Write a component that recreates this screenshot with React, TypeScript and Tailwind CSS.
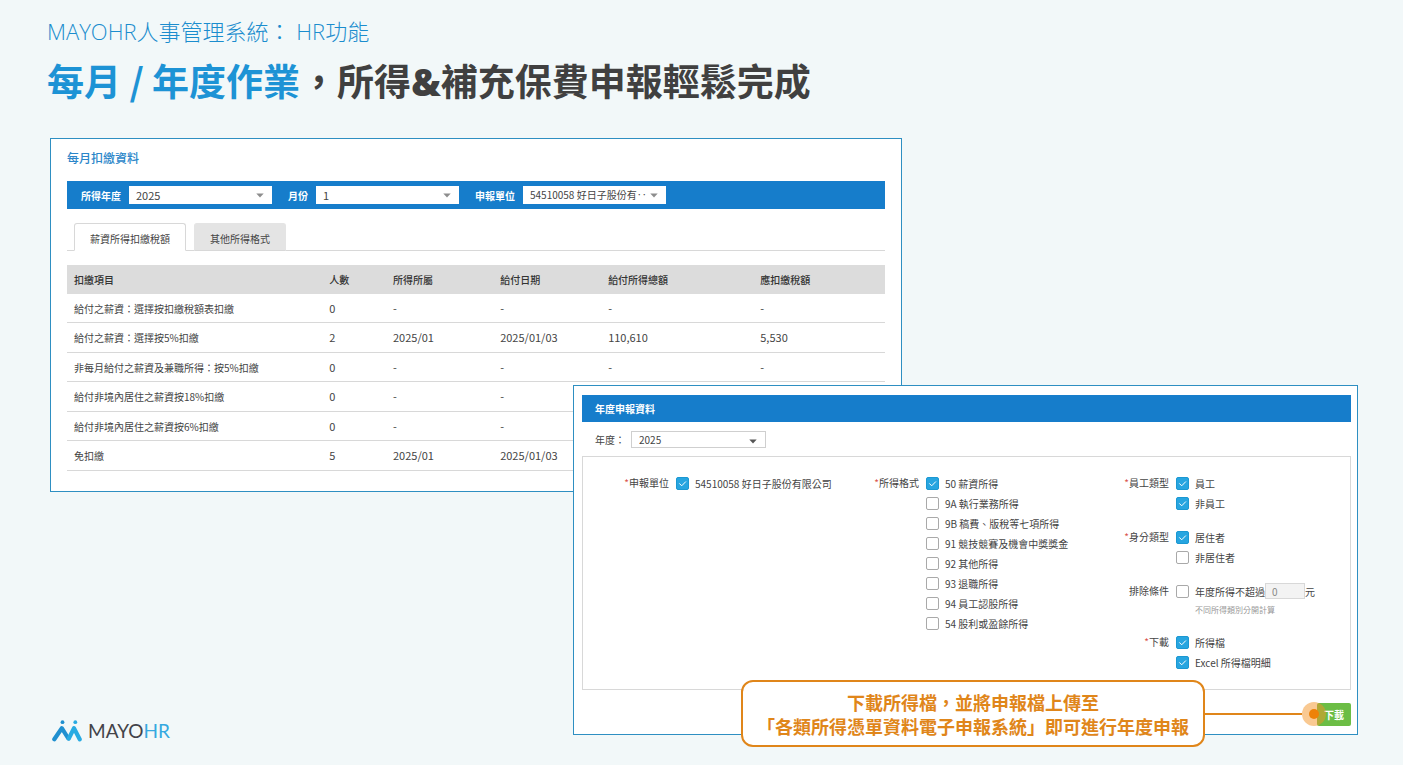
import { useState } from "react";
import type { ReactNode } from "react";
import clsx from "clsx";

const withholdingRows = [
  ["給付之薪資：選擇按扣繳稅額表扣繳", "0", "-", "-", "-", "-"],
  ["給付之薪資：選擇按5%扣繳", "2", "2025/01", "2025/01/03", "110,610", "5,530"],
  ["非每月給付之薪資及兼職所得：按5%扣繳", "0", "-", "-", "-", "-"],
  ["給付非境內居住之薪資按18%扣繳", "0", "-", "-", "", ""],
  ["給付非境內居住之薪資按6%扣繳", "0", "-", "-", "", ""],
  ["免扣繳", "5", "2025/01", "2025/01/03", "", ""],
];

const incomeFormats = [
  "50 薪資所得",
  "9A 執行業務所得",
  "9B 稿費、版稅等七項所得",
  "91 競技競賽及機會中獎獎金",
  "92 其他所得",
  "93 退職所得",
  "94 員工認股所得",
  "54 股利或盈餘所得",
];

const tabs = ["薪資所得扣繳稅額", "其他所得格式"];

type SelectProps = {
  id: string;
  value: string;
  className?: string;
  arrowClassName?: string;
};

function Select({ id, value, className, arrowClassName }: SelectProps) {
  return (
    <div className={clsx("grid items-center", className)}>
      <select
        id={id}
        defaultValue={value}
        className="col-start-1 row-start-1 h-full w-full appearance-none bg-transparent pl-[7px] pr-3 leading-4 text-[#444] outline-none"
      >
        <option value={value}>{value}</option>
      </select>
      <svg
        viewBox="0 0 8 5"
        className={clsx("pointer-events-none col-start-1 row-start-1 mr-2 h-[5px] w-2 justify-self-end", arrowClassName)}
        fill="currentColor"
      >
        <path d="M0.3 0.5h7.4L4 4.6z" />
      </svg>
    </div>
  );
}

function Checkbox({ label, checked = false }: { label: ReactNode; checked?: boolean }) {
  return (
    <label className="flex h-5 items-center gap-1.5 whitespace-nowrap">
      <span className="grid size-[13px] shrink-0">
        <input
          type="checkbox"
          defaultChecked={checked}
          className="peer col-start-1 row-start-1 size-[13px] appearance-none rounded-[2px] border border-[#a9a9a9] bg-white checked:border-[#1b98d2] checked:bg-[#27a5e0]"
        />
        <svg
          viewBox="0 0 13 13"
          className="pointer-events-none invisible col-start-1 row-start-1 size-[13px] peer-checked:visible"
          fill="none"
          stroke="white"
          strokeWidth="1"
        >
          <path d="M3.3 6.4l2.4 2.4 4.2-4.3" />
        </svg>
      </span>
      <span>{label}</span>
    </label>
  );
}

function Field({ label, required = true, children }: { label: string; required?: boolean; children: ReactNode }) {
  return (
    <div role="group" aria-label={label} className="flex gap-[7px]">
      <div className="h-5 w-[86px] shrink-0 text-right leading-5">
        {required && <span className="text-[#d9534f]">*</span>}
        {label}
      </div>
      <div>{children}</div>
    </div>
  );
}

function MonthlyPanel() {
  const [active, setActive] = useState(0);

  return (
    <section className="col-span-2 col-start-1 row-start-1 h-[354px] border border-[#2e8fc2] bg-white px-4 text-[10px] text-[#444]">
      <h2 className="pt-[9px] text-[12px] leading-5 font-medium text-[#2b86c9]">每月扣繳資料</h2>

      {/* Filter bar */}
      <div className="mt-[13px] flex h-7 items-center gap-4 bg-[#167dcb] pl-3.5">
        <div className="flex items-center gap-2">
          <label htmlFor="income-year" className="font-bold text-white">所得年度</label>
          <Select id="income-year" value="2025" className="h-[18px] w-[143px] bg-white text-[11px]" arrowClassName="text-[#8d8d8d]" />
        </div>
        <div className="flex items-center gap-2">
          <label htmlFor="income-month" className="font-bold text-white">月份</label>
          <Select id="income-month" value="1" className="h-[18px] w-[143px] bg-white text-[11px]" arrowClassName="text-[#8d8d8d]" />
        </div>
        <div className="flex items-center gap-2">
          <label htmlFor="income-unit" className="font-bold text-white">申報單位</label>
          <Select id="income-unit" value="54510058 好日子股份有‥" className="h-[18px] w-[143px] bg-white" arrowClassName="text-[#8d8d8d]" />
        </div>
      </div>

      {/* Tabs */}
      <div role="tablist" className="mt-3.5 flex gap-2 border-b border-[#d8d8d8] pl-[7px]">
        {tabs.map((tab, i) => (
          <button
            key={tab}
            type="button"
            role="tab"
            aria-selected={active === i}
            onClick={() => setActive(i)}
            className={clsx(
              "-mb-px h-7 rounded-t-[3px] border px-[15px] pt-0.5",
              active === i ? "border-[#d8d8d8] border-b-white bg-white" : "border-[#e4e4e4] border-b-[#d8d8d8] bg-[#e4e4e4]",
            )}
          >
            {tab}
          </button>
        ))}
      </div>

      <table className="mt-3.5 h-[206px] w-full table-fixed border-collapse text-left">
        <colgroup>
          <col className="w-[31.2%]" />
          <col className="w-[7.8%]" />
          <col className="w-[13.1%]" />
          <col className="w-[13.2%]" />
          <col className="w-[18.6%]" />
          <col className="w-[16.1%]" />
        </colgroup>
        <thead>
          <tr className="h-[29px] bg-[#dcdcdc]">
            {["扣繳項目", "人數", "所得所屬", "給付日期", "給付所得總額", "應扣繳稅額"].map((title) => (
              <th key={title} className="px-[7px] font-medium text-[#333]">{title}</th>
            ))}
          </tr>
        </thead>
        <tbody>
          {withholdingRows.map(([name, ...cells]) => (
            <tr key={name} className="border-b border-[#d8d8d8]">
              <td className="px-[7px] whitespace-nowrap">{name}</td>
              {cells.map((cell, i) => (
                <td key={i} className="px-[7px] text-[11px]">{cell}</td>
              ))}
            </tr>
          ))}
        </tbody>
      </table>
    </section>
  );
}

function AnnualPanel() {
  return (
    <section className="relative col-span-2 col-start-2 row-start-1 mt-[247px] mb-2 h-[350px] border border-[#2e8fc2] bg-white pt-[9px] pr-1.5 pl-2 text-[10px] text-[#444]">
      <h2 className="h-[27px] bg-[#167dcb] pl-[13px] leading-[27px] font-bold text-white">年度申報資料</h2>

      <div className="mt-2 flex h-[18px] items-center gap-1.5 pl-[13px]">
        <label htmlFor="report-year">年度：</label>
        <Select id="report-year" value="2025" className="h-[17px] w-[135px] border border-[#cfcfcf] bg-white" arrowClassName="mt-1 text-[#555]" />
      </div>

      <form className="mt-2 grid h-[234px] grid-cols-[250fr_250fr_267fr] border border-[#d8d8d8] pt-4">
        <Field label="申報單位">
          <Checkbox label="54510058 好日子股份有限公司" checked />
        </Field>

        <Field label="所得格式">
          {incomeFormats.map((format, i) => (
            <Checkbox key={format} label={format} checked={i === 0} />
          ))}
        </Field>

        <div className="flex flex-col gap-3.5">
          <Field label="員工類型">
            <Checkbox label="員工" checked />
            <Checkbox label="非員工" checked />
          </Field>
          <Field label="身分類型">
            <Checkbox label="居住者" checked />
            <Checkbox label="非居住者" />
          </Field>
          <Field label="排除條件" required={false}>
            <div className="flex h-5 items-center">
              <Checkbox label="年度所得不超過" />
              <input
                type="text"
                aria-label="年度所得上限"
                defaultValue="0"
                disabled
                className="h-4 w-10 border border-[#d8d8d8] bg-[#f3f3f3] px-1.5 text-[#888]"
              />
              元
            </div>
            <p className="h-[17px] pl-[19px] text-[8px] leading-[17px] text-[#999]">不同所得類別分開計算</p>
          </Field>
          <Field label="下載">
            <Checkbox label="所得檔" checked />
            <Checkbox label="Excel 所得檔明細" checked />
          </Field>
        </div>
      </form>

      <div className="mt-[13px] flex justify-end">
        <button type="button" className="h-[23px] w-[34px] rounded-[2px] bg-[#6cbd45] font-bold text-white">下載</button>
      </div>

      {/* Callout pointing at the download button */}
      <div className="absolute top-[294px] right-[31px] flex items-center">
        <p className="rounded-xl border-2 border-[#e0861a] bg-white px-3.5 pt-2 pb-[7px] text-center text-[18px] leading-6 font-bold whitespace-nowrap text-[#e0861a]">
          下載所得檔，並將申報檔上傳至
          <br />
          「各類所得憑單資料電子申報系統」即可進行年度申報
        </p>
        <span className="h-0.5 w-[97px] bg-[#e0861a]" />
        <span className="grid size-6 place-items-center rounded-full bg-[#f39325]/50">
          <span className="size-2.5 rounded-full bg-[#ee8208]" />
        </span>
      </div>
    </section>
  );
}

function Logo() {
  return (
    <div className="col-start-1 row-start-1 flex items-center gap-1.5 self-end pl-0.5">
      <svg viewBox="0 0 30 22" className="h-[22px] w-[30px]" fill="none" strokeWidth="4.2" strokeLinecap="round" strokeLinejoin="round">
        <path d="M2.300 19.300L9.800 8.200 16.300 18.500" stroke="#2090d0" />
        <path d="M16.800 18.500L22 8.200 27.700 19.300" stroke="#29abe2" />
        <circle cx="10.500" cy="2.200" r="1.900" fill="#2090d0" />
        <circle cx="23.300" cy="2.200" r="1.900" fill="#29abe2" />
      </svg>
      <span className="font-['Lato'] text-[19px] leading-6 text-[#434349]">
        MAYO<span className="text-[#35a8e0]">HR</span>
      </span>
    </div>
  );
}

export default function App() {
  return (
    <main
      lang="zh-Hant"
      className="min-h-screen bg-[#f2f8f9] pr-[45px] pl-[50px] font-['Noto_Sans_CJK_TC',sans-serif]"
    >
      <header className="-ml-[3px] pt-4">
        <p className="h-[30px] font-['Open_Sans','Noto_Sans_CJK_TC',sans-serif] text-[22px] leading-[30px] font-light text-[#1b8dce]">
          MAYOHR人事管理系統： HR功能
        </p>
        <h1 className="mt-2 h-[52px] text-[37px] leading-[52px] font-bold text-[#404040]">
          <span className="text-[#1d93d5]">每月 / 年度作業</span>，所得
          <span className="font-['Open_Sans'] leading-none font-extrabold">&amp;</span>補充保費申報輕鬆完成
        </h1>
      </header>

      <div className="mt-8 grid grid-cols-[523fr_329fr_456fr] items-start">
        <MonthlyPanel />
        <AnnualPanel />
        <Logo />
      </div>
    </main>
  );
}
